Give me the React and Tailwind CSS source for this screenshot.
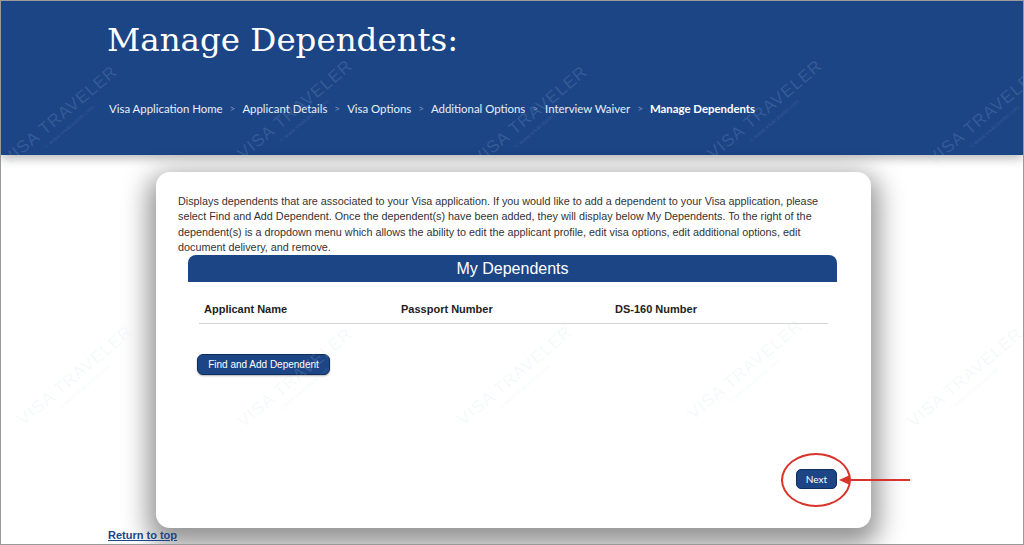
import React from 'react';

const crumbs = [
  'Visa Application Home',
  'Applicant Details',
  'Visa Options',
  'Additional Options',
  'Interview Waiver',
];

const marks = [
  [60, 118], [295, 112], [530, 118], [765, 112], [985, 118],
  [75, 378], [295, 380], [515, 378], [745, 372], [965, 380],
];

const Watermark = ({ x, y }) => (
  <div
    className="absolute z-30 pointer-events-none flex flex-col items-center whitespace-nowrap -rotate-[40deg] text-[rgba(190,220,232,0.16)]"
    style={{ left: x - 70, top: y - 14 }}
  >
    <div className="text-[17px] tracking-[1px] leading-[20px] font-['Liberation_Sans',sans-serif]">
      VISA TRAVELER
    </div>
    <div className="text-[6px] leading-[8px] font-['Liberation_Sans',sans-serif]">© www.visatraveler.com</div>
  </div>
);

const App = () => {
  return (
    <div className="relative w-[1024px] h-[545px] overflow-hidden bg-white border border-[#9a9a9a]">
      {/* Header */}
      <div className="relative z-10 h-[154px] bg-[#1c4586] pl-[106px] shadow-[0_3px_10px_rgba(0,0,0,0.3)]">
        <h1 className="pt-[17px] text-[32.5px] leading-[44px] text-white font-['DejaVu_Serif',serif]">
          Manage Dependents:
        </h1>
        <div className="mt-[38px] ml-[2px] flex items-center text-[11.4px] text-[#e9eef7] font-['Lato',sans-serif]">
          {crumbs.map(c => (
            <React.Fragment key={c}>
              <span>{c}</span>
              <span className="mx-[7px] text-[#7f95bd] text-[10px]">&gt;</span>
            </React.Fragment>
          ))}
          <span className="font-bold text-white">Manage Dependents</span>
        </div>
      </div>

      {/* Card */}
      <div className="relative z-10 ml-[155px] mt-[17px] w-[715px] h-[356px] bg-white rounded-[14px] shadow-[0_10px_26px_8px_rgba(0,0,0,0.42)] px-[22px] pt-[22px] flex flex-col font-['Liberation_Sans',Arial,sans-serif]">
        <p className="text-[10.8px] leading-[15.3px] text-[#333]">
          Displays dependents that are associated to your Visa application. If you would like to add a dependent to your Visa application, please
          select Find and Add Dependent. Once the dependent(s) have been added, they will display below My Dependents. To the right of the
          dependent(s) is a dropdown menu which allows the ability to edit the applicant profile, edit visa options, edit additional options, edit
          document delivery, and remove.
        </p>

        <div className="ml-[10px] w-[649px] h-[27px] bg-[#1c4586] rounded-t-[8px] flex items-center justify-center text-white text-[16px]">
          My Dependents
        </div>

        <div className="ml-[21px] w-[629px] mt-[19px] grid grid-cols-[197px_214px_1fr] border-b border-[#d4d4d4] pb-[5px] text-[11px] font-bold text-[#222]">
          <div className="pl-[5px]">Applicant Name</div>
          <div className="pl-[5px]">Passport Number</div>
          <div className="pl-[5px]">DS-160 Number</div>
        </div>

        <div className="mt-[27px] ml-[19px]">
          <button className="h-[21px] w-[133px] rounded-[6px] bg-[#1c4586] border border-[#0f2d5c] text-white text-[10px] shadow-[0_1px_2px_rgba(0,0,0,0.3)]">
            Find and Add Dependent
          </button>
        </div>

        <div className="flex-1 flex items-end justify-end pb-[39px] pr-[12px]">
          <button className="h-[20px] w-[41px] rounded-[5px] bg-[#1c4586] border border-[#0f2d5c] text-white text-[10px] font-['Lato',sans-serif]">
            Next
          </button>
        </div>
      </div>

      <a href="#" className="relative z-10 block ml-[107px] -mt-[1px] text-[11px] font-bold text-[#1c4586] underline font-['Liberation_Sans',Arial,sans-serif]">
        Return to top
      </a>

      {marks.map(([x, y]) => (
        <Watermark key={`${x}-${y}`} x={x} y={y} />
      ))}

      {/* annotation */}
      <div className="absolute z-20 left-[780px] top-[452px] w-[70px] h-[54px] rounded-[50%] border-[2px] border-[#d8342b]" />
      <svg className="absolute z-20 left-[836px] top-[471px]" width="76" height="16" viewBox="0 0 76 16">
        <line x1="10" y1="8" x2="73" y2="8" stroke="#d8342b" strokeWidth="2" />
        <polygon points="2,8 13,3 13,13" fill="#d8342b" />
      </svg>
    </div>
  );
};

export default App;
